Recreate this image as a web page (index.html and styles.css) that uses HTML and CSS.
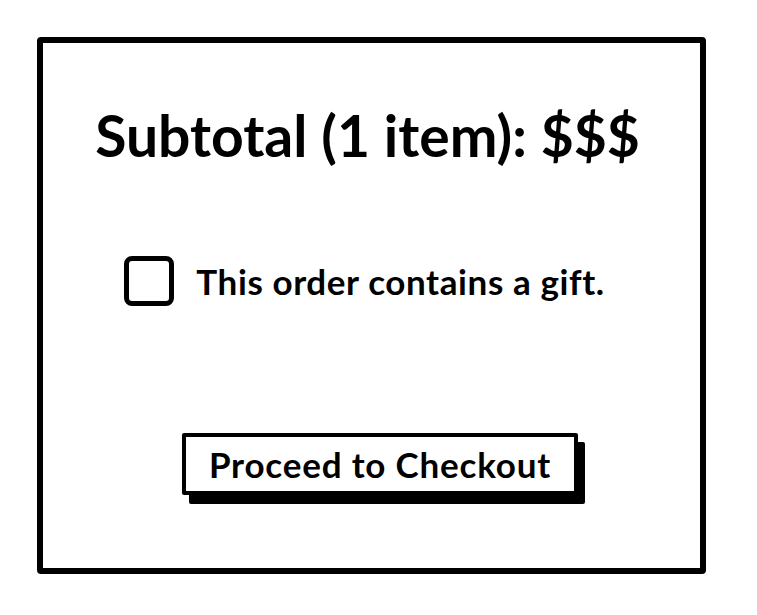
FILE: index.html
```html
<!DOCTYPE html>
<html>
<head>
<meta charset="utf-8">
<link rel="stylesheet" href="styles.css">
</head>
<body>
<div class="card">
  <h1 class="title">Subtotal (1 item): $$$</h1>
  <label class="gift">
    <span class="box"></span>
    <span class="gift-text">This order contains a gift.</span>
  </label>
  <button class="checkout">Proceed to Checkout</button>
</div>
</body>
</html>
```
FILE: styles.css
```css
html, body {
  margin: 0;
  padding: 0;
  background: #fff;
}
body {
  font-family: "Lato", "Noto Sans", sans-serif;
  color: #000;
  padding: 37px;
}
.card {
  box-sizing: border-box;
  width: 669px;
  height: 537px;
  border: 6px solid #000;
  border-radius: 4px;
  display: flex;
  flex-direction: column;
  align-items: center;
  padding-top: 64px;
}
.title {
  margin: 0 8px 0 0;
  font-size: 57px;
  line-height: 57px;
  font-weight: 700;
}
.gift {
  margin-top: 92px;
  display: flex;
  align-items: center;
  gap: 22px;
  margin-right: 14px;
}
.box {
  box-sizing: border-box;
  width: 50px;
  height: 50px;
  border: 5px solid #000;
  border-radius: 8px;
}
.gift-text {
  font-size: 35px;
  font-weight: 700;
  letter-spacing: 0.6px;
}
.checkout {
  margin-top: 127px;
  margin-left: 17px;
  box-sizing: border-box;
  width: 396px;
  height: 62px;
  padding: 0;
  background: #fff;
  border: 4px solid #000;
  border-radius: 2px;
  box-shadow: 7px 9px 0 #000;
  font-family: "Lato", "Noto Sans", sans-serif;
  font-size: 35px;
  font-weight: 700;
  letter-spacing: 0.8px;
  color: #000;
}
```
